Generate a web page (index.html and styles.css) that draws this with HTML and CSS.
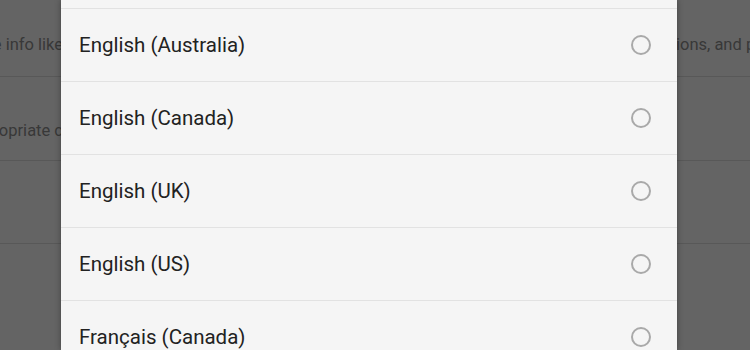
FILE: index.html
```html
<!DOCTYPE html>
<html>
<head>
<meta charset="utf-8">
<link rel="stylesheet" href="styles.css">
</head>
<body>
<div class="page">
  <div class="bg-row r1">
    <span class="bg-left">Save info like</span>
    <span class="bg-right">ions, and personalise</span>
  </div>
  <div class="bg-row r2">
    <span class="bg-left">appropriate c</span>
    <span class="bg-right"></span>
  </div>
  <div class="bg-row r3"></div>
</div>
<div class="dialog">
  <ul class="list">
    <li class="item"><span class="label">English (Australia)</span><span class="radio"></span></li>
    <li class="item"><span class="label">English (Canada)</span><span class="radio"></span></li>
    <li class="item"><span class="label">English (UK)</span><span class="radio"></span></li>
    <li class="item"><span class="label">English (US)</span><span class="radio"></span></li>
    <li class="item"><span class="label">Français (Canada)</span><span class="radio"></span></li>
  </ul>
</div>
</body>
</html>
```

FILE: styles.css
```css
html, body {
  margin: 0;
  padding: 0;
  width: 750px;
  height: 350px;
  overflow: hidden;
  background: #646464;
  font-family: Roboto, "Liberation Sans", sans-serif;
}
.page {
  width: 750px;
}
.bg-row {
  display: flex;
  justify-content: space-between;
  align-items: flex-start;
  border-bottom: 1px solid #585858;
  box-sizing: border-box;
  font-size: 16.5px;
  line-height: 20px;
  color: #383838;
}
.r1 { height: 77px; padding-top: 35px; }
.r2 { height: 84px; padding-top: 44px; }
.r3 { height: 83px; }
.bg-left {
  width: 63px;
  white-space: nowrap;
  overflow: hidden;
  direction: rtl;
  text-align: left;
}
.bg-right {
  width: 73px;
  white-space: nowrap;
  overflow: hidden;
  text-indent: -1px;
}
.dialog {
  position: absolute;
  top: 0;
  left: 61px;
  width: 616px;
  height: 350px;
  overflow: hidden;
  background: #f5f5f5;
  padding-top: 8px;
  box-sizing: border-box;
  box-shadow: 0 0 6px rgba(0,0,0,0.35);
}
.list {
  list-style: none;
  margin: 0;
  padding: 0;
}
.item {
  display: flex;
  align-items: center;
  justify-content: space-between;
  height: 72px;
  border-top: 1px solid #e2e2e2;
  padding: 0 26px 0 18px;
}
.label {
  font-size: 20.5px;
  color: #222222;
}
.radio {
  width: 16px;
  height: 16px;
  border: 2px solid #a9a9a9;
  border-radius: 50%;
}
```
